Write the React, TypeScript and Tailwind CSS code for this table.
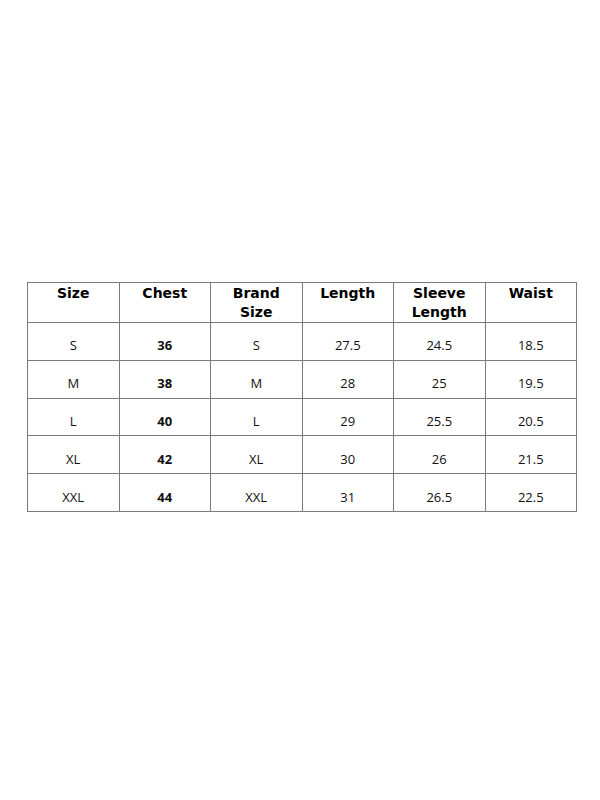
const headers = [['Size'], ['Chest'], ['Brand', 'Size'], ['Length'], ['Sleeve', 'Length'], ['Waist']];

const rows = [
  ['S', '36', 'S', '27.5', '24.5', '18.5'],
  ['M', '38', 'M', '28', '25', '19.5'],
  ['L', '40', 'L', '29', '25.5', '20.5'],
  ['XL', '42', 'XL', '30', '26', '21.5'],
  ['XXL', '44', 'XXL', '31', '26.5', '22.5'],
];

export default function App() {
  return (
    <div className="w-[600px] h-[800px] bg-white pt-[282px] pl-[27px]">
      <table className="border-collapse table-fixed w-[549px]">
        <thead>
          <tr className="h-[38px]">
            {headers.map((h, i) => (
              <th
                key={i}
                className="border border-[#7a7a7a] align-top pt-[1px] text-center text-[14px] leading-[19px] text-black font-bold w-[91.5px]"
                style={{ fontFamily: '"DejaVu Sans", sans-serif' }}
              >
                {h.map((line) => (
                  <div key={line}>{line}</div>
                ))}
              </th>
            ))}
          </tr>
        </thead>
        <tbody>
          {rows.map((r) => (
            <tr key={r[0]} className="h-[37.8px]">
              {r.map((c, j) => (
                <td
                  key={j}
                  className={`border border-[#7a7a7a] text-center align-middle pt-[8px] text-[13px] leading-[18px] text-[#111] ${j === 1 ? 'font-bold' : 'font-normal'}`}
                  style={{ fontFamily: '"Open Sans", sans-serif' }}
                >
                  {c}
                </td>
              ))}
            </tr>
          ))}
        </tbody>
      </table>
    </div>
  );
}
